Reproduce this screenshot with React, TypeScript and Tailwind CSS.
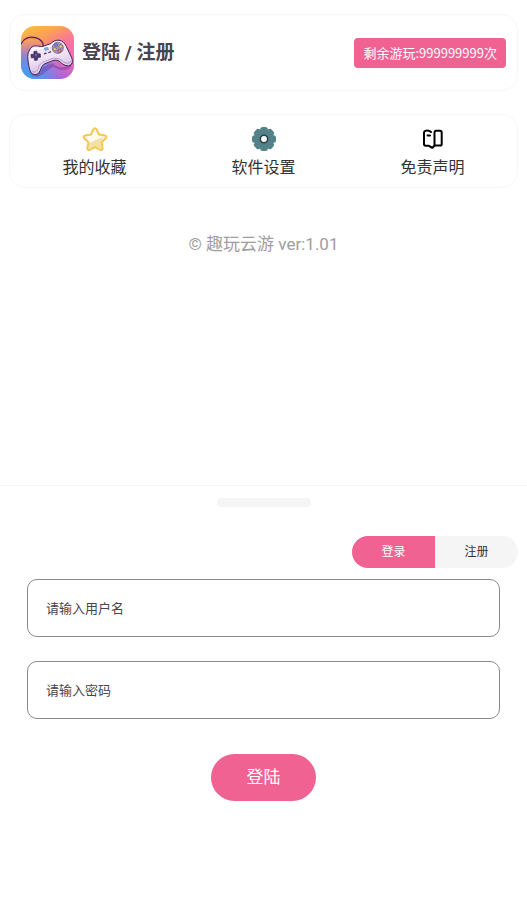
import React, { useState } from 'react';

const remainingPlays = 999999999;
const version = '1.01';

function AppLogo() {
  return (
    <svg viewBox="0 0 160 160" className="size-[53px] shrink-0 rounded-[14px]" aria-hidden="true">
      <defs>
        <linearGradient id="logo-bg" x1="0.25" y1="0" x2="0.6" y2="1">
          <stop offset="0" stopColor="#fdb945" />
          <stop offset="0.3" stopColor="#fb9560" />
          <stop offset="0.58" stopColor="#ee6f9f" />
          <stop offset="1" stopColor="#a95fdc" />
        </linearGradient>
        <radialGradient id="logo-blue" cx="0.12" cy="1" r="0.75">
          <stop offset="0" stopColor="#35a6f7" />
          <stop offset="0.5" stopColor="#5f8df0" stopOpacity="0.85" />
          <stop offset="1" stopColor="#9b74e4" stopOpacity="0" />
        </radialGradient>
        <radialGradient id="logo-pink" cx="1" cy="0.5" r="0.6">
          <stop offset="0" stopColor="#fb6fae" />
          <stop offset="1" stopColor="#fb6fae" stopOpacity="0" />
        </radialGradient>
        <linearGradient id="logo-pad" x1="0" y1="0" x2="0.3" y2="1">
          <stop offset="0" stopColor="#fdeef5" />
          <stop offset="0.6" stopColor="#efe0f4" />
          <stop offset="1" stopColor="#d5bde6" />
        </linearGradient>
      </defs>
      <rect width="160" height="160" fill="url(#logo-bg)" />
      <rect width="160" height="160" fill="url(#logo-pink)" />
      <rect width="160" height="160" fill="url(#logo-blue)" />
      <path
        d="M30 140C46 154 60 138 68 124L94 112C108 126 130 130 144 116L156 112C148 138 120 138 98 124L74 138C62 152 46 158 30 148Z"
        fill="#7b3fa8"
        opacity="0.55"
      />
      <path d="M0 55C8 36 28 30 46 36C60 41 68 48 67 62" fill="none" stroke="#4a2452" strokeWidth="4" />
      <path d="M1 53C10 38 28 33 45 38" fill="none" stroke="#a4524f" strokeWidth="1.5" />
      <path
        d="M26 73C30 61 42 58 54 61C60 63 65 62 70 60L90 53C96 46 106 42 115 43C125 44 132 52 137 62L153 96C158 108 154 118 144 120C134 122 124 114 115 106C107 101 98 103 89 107L70 115C62 120 60 133 54 142C48 149 34 148 29 139C25 129 22 115 21 101C19 89 21 81 26 73Z"
        fill="url(#logo-pad)"
        stroke="#3b2452"
        strokeWidth="3"
        strokeLinejoin="round"
      />
      <path
        d="M28 79C34 66 45 67 56 69C67 69 82 60 94 57C104 48 116 46 125 57"
        fill="none"
        stroke="#fff"
        strokeWidth="4"
        strokeLinecap="round"
      />
      <path
        d="M33 136C42 144 50 135 54 122C58 111 68 109 87 101C103 94 114 97 126 106C134 113 144 116 150 106"
        fill="none"
        stroke="#b798d2"
        strokeWidth="3"
      />
      <path
        d="M39 77l9-1 1 8 9 0 1 10-9 1 0 8-9 1-1-8-9 0-1-10 9-1z"
        fill="#4a3772"
        stroke="#35295b"
        strokeWidth="2"
      />
      <path d="M41 85l7-1 1 7-7 1z" fill="#725c9c" />
      <circle cx="111" cy="66" r="17" fill="#a893bd" stroke="#6c5787" strokeWidth="2" />
      <circle cx="106" cy="57" r="5" fill="#6590cf" stroke="#3b2452" strokeWidth="1" />
      <circle cx="120" cy="62" r="5" fill="#f4ca65" stroke="#3b2452" strokeWidth="1" />
      <circle cx="102" cy="70" r="5" fill="#dfd16b" stroke="#3b2452" strokeWidth="1" />
      <circle cx="116" cy="75" r="5" fill="#e9715e" stroke="#3b2452" strokeWidth="1" />
      <path d="M70 67l10-3 3 7-10 3z" fill="#7ab4ed" stroke="#5a77b8" strokeWidth="1.5" />
      <path d="M71 84l5-2M84 80l5-2" stroke="#46345f" strokeWidth="4" strokeLinecap="round" />
    </svg>
  );
}

function StarIcon() {
  return (
    <svg viewBox="0 0 26 26" className="size-[26px]" aria-hidden="true">
      <path
        d="M13 2.2c.7 0 1.2.4 1.5 1l2.5 5.3 5.9.9c1.5.3 1.900 1.800.9 2.800l-4.200 4.100 1 5.900c.2 1.400-1.100 2.300-2.300 1.700L13 21.100l-5.300 2.800c-1.200.6-2.500-.3-2.300-1.700l1-5.900-4.200-4.100c-1-1-.6-2.500.9-2.800l5.900-.9 2.500-5.300c.3-.6.8-1 1.500-1z"
        fill="#fffaf0"
      />
      <path d="M21.5 10.500L6.500 17.500 6 23.200 13 20.200 19.500 23.200 18.500 16z" fill="#f5dfa6" />
      <path
        d="M13 2.200c.7 0 1.200.4 1.500 1l2.500 5.300 5.900.9c1.500.3 1.900 1.800.9 2.800l-4.200 4.100 1 5.900c.2 1.400-1.100 2.300-2.300 1.700L13 21.100l-5.300 2.800c-1.200.6-2.500-.3-2.300-1.700l1-5.900-4.200-4.100c-1-1-.6-2.500.9-2.800l5.900-.9 2.500-5.300c.3-.6.8-1 1.500-1z"
        fill="none"
        stroke="#f2c94f"
        strokeWidth="2"
        strokeLinejoin="round"
      />
    </svg>
  );
}

function GearIcon() {
  return (
    <svg viewBox="0 0 26 26" className="size-[26px]" aria-hidden="true">
      <g fill="#548289">
        <circle cx="13" cy="13" r="10" />
        {[0, 45, 90, 135, 180, 225, 270, 315].map(angle => (
          <rect key={angle} x="9.2" y="1" width="7.6" height="7" rx="2.5" transform={`rotate(${angle} 13 13)`} />
        ))}
      </g>
      <circle cx="13" cy="13" r="3.7" fill="#fff" stroke="#2d4045" strokeWidth="1.6" />
    </svg>
  );
}

function BookIcon() {
  return (
    <svg
      viewBox="0 0 26 26"
      className="size-[26px]"
      fill="none"
      stroke="#000"
      strokeWidth="2"
      strokeLinecap="round"
      strokeLinejoin="round"
      aria-hidden="true"
    >
      <path d="M11 6C9.500 4.500 7.500 4.500 5.800 4.700C4.600 4.900 4 5.500 4 6.600V18C4 19.300 4.600 19.800 5.800 19.800H8.500C10 19.800 10.500 21.500 12.500 21.700L14.500 19.600" />
      <path d="M14.500 19.600V6.500C14.500 5.200 15 4.700 16.200 4.700H20C21.200 4.700 21.700 5.200 21.700 6.400V18C21.700 19.100 21.200 19.600 20 19.600Z" />
      <path d="M7.500 9.500H10" />
    </svg>
  );
}

const menuItems = [
  { label: '我的收藏', icon: <StarIcon /> },
  { label: '软件设置', icon: <GearIcon /> },
  { label: '免责声明', icon: <BookIcon /> },
];

const tabs = [
  { id: 'login', label: '登录' },
  { id: 'register', label: '注册' },
];

interface FieldProps {
  label: string;
  type: string;
  value: string;
  onChange: (value: string) => void;
}

function Field({ label, type, value, onChange }: FieldProps) {
  return (
    <input
      type={type}
      aria-label={label}
      placeholder={label}
      value={value}
      onChange={e => onChange(e.target.value)}
      className="h-[58px] w-full rounded-[10px] border border-[#8a8a8c] bg-white px-[18px] text-[13px] text-[#49454f] outline-none placeholder:text-[#49454f]"
    />
  );
}

export default function App() {
  const [tab, setTab] = useState('login');
  const [username, setUsername] = useState('');
  const [password, setPassword] = useState('');

  return (
    <div className="flex min-h-screen flex-col bg-white font-['Roboto','Noto_Sans_CJK_SC',sans-serif] text-[#333]">
      <main className="flex-1 px-[9px] pt-[14px]">
        <header className="flex items-center justify-between rounded-2xl border border-[#f7f7f7] px-[11px] py-[11px]">
          <button type="button" className="flex items-center gap-2">
            <AppLogo />
            <span className="pt-0.5 text-[19px] font-bold text-[#49454f]">登陆 / 注册</span>
          </button>
          <span className="rounded bg-[#f06292] px-[9px] py-[5px] font-['Noto_Sans_CJK_SC',sans-serif] text-[13px] leading-5 text-white">
            剩余游玩:{remainingPlays}次
          </span>
        </header>

        <nav className="mt-[23px] grid grid-cols-3 rounded-2xl border border-[#f7f7f7] pt-[11px] pb-[7px]">
          {menuItems.map(item => (
            <button key={item.label} type="button" className="flex flex-col items-center gap-1">
              {item.icon}
              <span className="text-base leading-6">{item.label}</span>
            </button>
          ))}
        </nav>

        <p className="mt-11 text-center text-[17px] leading-6 text-[#9e9e9e]">© 趣玩云游 ver:{version}</p>
      </main>

      <section className="border-t border-[#f5f5f5] px-[9px] pt-3 pb-[109px]">
        <div className="mx-auto h-[9px] w-[94px] rounded-full bg-[#f5f5f5]" />

        <div className="mt-[29px] flex justify-end">
          <div className="flex overflow-hidden rounded-full bg-[#f5f5f5]">
            {tabs.map(item => (
              <button
                key={item.id}
                type="button"
                aria-pressed={tab === item.id}
                onClick={() => setTab(item.id)}
                className={`h-8 w-[83px] text-xs ${tab === item.id ? 'bg-[#f06292] text-white' : 'text-[#333]'}`}
              >
                {item.label}
              </button>
            ))}
          </div>
        </div>

        <form className="mt-[11px] flex flex-col gap-6 px-[18px]" onSubmit={e => e.preventDefault()}>
          <Field label="请输入用户名" type="text" value={username} onChange={setUsername} />
          <Field label="请输入密码" type="password" value={password} onChange={setPassword} />
          <button
            type="submit"
            className="mt-[11px] h-[47px] w-[105px] self-center rounded-full bg-[#f06292] text-[17px] text-white"
          >
            {tab === 'login' ? '登陆' : '注册'}
          </button>
        </form>
      </section>
    </div>
  );
}
